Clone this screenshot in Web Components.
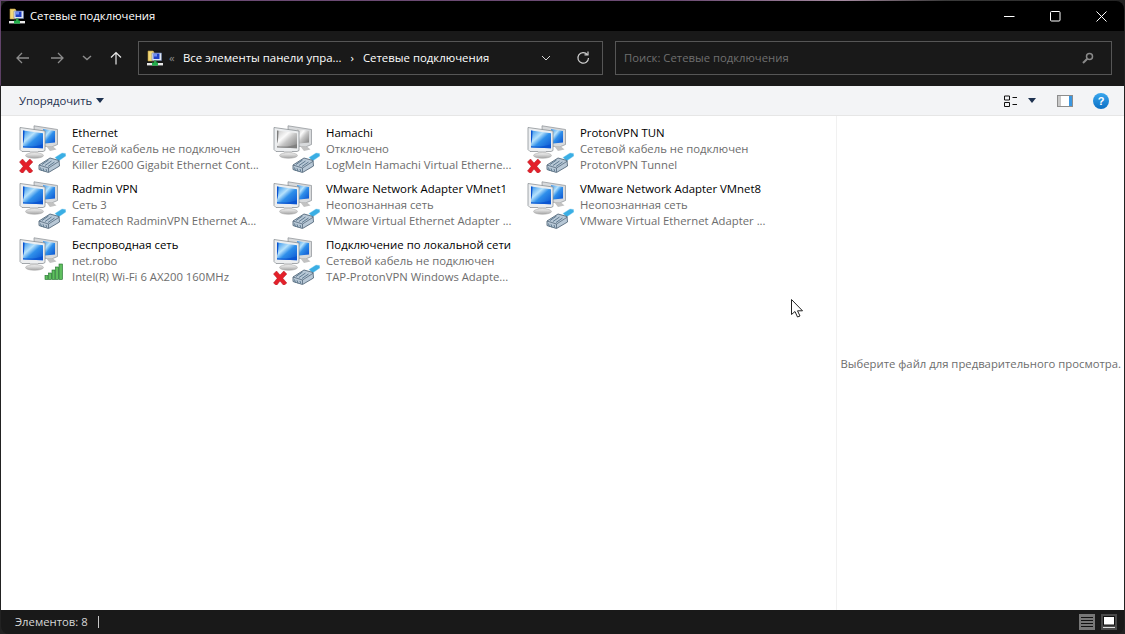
<!DOCTYPE html>
<html lang="ru"><head><meta charset="utf-8"><title>Сетевые подключения</title>
<style>
html,body{margin:0;height:100%;overflow:hidden;background:#1c1c1c}
body{font:11.3px "Open Sans","Noto Sans",sans-serif}
</style></head><body>
<explorer-window>
  <title-bar slot="title">Сетевые подключения</title-bar>
  <nav-bar slot="nav"></nav-bar>
  <tool-bar slot="tools"></tool-bar>
  <item-grid slot="items">
    <net-item name="Ethernet" status="Сетевой кабель не подключен" device="Killer E2600 Gigabit Ethernet Cont..." badge="x"></net-item>
    <net-item name="Hamachi" status="Отключено" device="LogMeIn Hamachi Virtual Etherne..." gray></net-item>
    <net-item name="ProtonVPN TUN" status="Сетевой кабель не подключен" device="ProtonVPN Tunnel" badge="x"></net-item>
    <net-item name="Radmin VPN" status="Сеть 3" device="Famatech RadminVPN Ethernet A..."></net-item>
    <net-item name="VMware Network Adapter VMnet1" status="Неопознанная сеть" device="VMware Virtual Ethernet Adapter ..."></net-item>
    <net-item name="VMware Network Adapter VMnet8" status="Неопознанная сеть" device="VMware Virtual Ethernet Adapter ..."></net-item>
    <net-item name="Беспроводная сеть" status="net.robo" device="Intel(R) Wi-Fi 6 AX200 160MHz" badge="wifi"></net-item>
    <net-item name="Подключение по локальной сети" status="Сетевой кабель не подключен" device="TAP-ProtonVPN Windows Adapte..." badge="x"></net-item>
  </item-grid>
  <preview-pane slot="preview">Выберите файл для предварительного просмотра.</preview-pane>
  <status-bar slot="status">Элементов: 8</status-bar>
  <mouse-cursor slot="cursor"></mouse-cursor>
</explorer-window>
<script>
const APPICON=`<svg width="16" height="16" viewBox="0 0 16 16" style="display:block;flex:none">
<path d="M1 1h5l1 1v9H1z" fill="#f2d878" stroke="#b9983a" stroke-width=".6"/>
<path d="M5 3h9.500v7.500H5z" fill="#dfe6f2" stroke="#6c7ea8" stroke-width=".6"/>
<rect x="6.500" y="3.500" width="6" height="5.500" fill="#1f3fc4"/><rect x="7" y="4" width="3" height="2.500" fill="#6f8df0"/>
<rect x="7" y="10.500" width="2.500" height="2.500" fill="#2fa24a"/><rect x="0" y="13" width="16" height="2.400" fill="#e8e8e8"/><rect x="5" y="12.600" width="6" height="3" fill="#22b14c"/></svg>`;
function define(tag,html){customElements.define(tag,class extends HTMLElement{
  constructor(){super();this.attachShadow({mode:'open'}).innerHTML=html;}
});}
function lateDefine(tag,fn){customElements.define(tag,class extends HTMLElement{
  connectedCallback(){if(!this.shadowRoot)this.attachShadow({mode:'open'}).innerHTML=fn(this);}
});}

define('explorer-window',`<style>
:host{position:relative;display:grid;grid-template-columns:1fr 287px;grid-template-rows:30px 55px 30px 1fr 24px;height:634px;box-sizing:border-box;padding:1px 1px 0 1px;
 background:
  linear-gradient(90deg,#6b4a74 0,#6a4a72 60%,#a58aa0 75%,#3a3a3a 84%,#222 100%) top/100% 1px no-repeat,
  linear-gradient(180deg,#6b4a74 0,#5a3e62 85px,#222 86px) left/1px 100% no-repeat,#222;}
::slotted([slot=title]),::slotted([slot=nav]),::slotted([slot=tools]),::slotted([slot=status]){grid-column:1/3}
</style><slot name="title"></slot><slot name="nav"></slot><slot name="tools"></slot><slot name="items"></slot><slot name="preview"></slot><slot name="status"></slot><slot name="cursor"></slot>`);

define('mouse-cursor',`<style>
:host{position:absolute;left:791px;top:299px;width:14px;height:20px;display:block}
svg{display:block}
</style><svg width="14" height="20" viewBox="0 0 14 20"><path d="M.5.500v15l3.500-3 2.500 5.500 2.500-1-2.500-5.200h5z" fill="#fff" stroke="#222" stroke-width="1" stroke-linejoin="round"/></svg>`);

define('title-bar',`<style>
:host{display:flex;align-items:center;background:#000;color:#fff;border-radius:8px 8px 0 0;padding-left:8px;font-size:11.3px;height:30px}
.txt{margin-left:5px;flex:1;padding-bottom:2px}
.b{width:46px;height:30px;display:flex;align-items:center;justify-content:center}
.ctl{display:flex}
svg{display:block}
</style>${APPICON}<span class="txt"><slot></slot></span>
<div class="ctl">
<div class="b"><svg width="11" height="11"><path d="M0 5.500h10.500" stroke="#fff"/></svg></div>
<div class="b"><svg width="11" height="11"><rect x=".5" y=".5" width="9.500" height="9.500" rx="1" fill="none" stroke="#fff"/></svg></div>
<div class="b"><svg width="11" height="11"><path d="M.5.500l10 10M10.500.500l-10 10" stroke="#fff" fill="none"/></svg></div>
</div>`);

define('nav-bar',`<style>
:host{display:flex;align-items:center;background:#191919;color:#fff;height:55px;box-sizing:border-box;padding:0 12px 1px 14px;font-size:11.3px}
svg{display:block;flex:none}
.arrows{display:flex;align-items:center;width:123px;flex:none}
.a{display:flex;justify-content:center;align-items:center;height:16px}
.box{height:34px;box-sizing:border-box;border:1px solid #565656;display:flex;align-items:center}
.box span{padding-bottom:2px}
.addr{width:465px;padding-left:8px;font-weight:500;flex:none;font-size:11.4px}
.addr .chev{color:#8a8a8a;margin:0 6px 0 6px;font-weight:400;width:8px}
.addr .sep{margin:0 9px 0 9px}
.addr .main{flex:1}
.search{flex:1;margin-left:12px;padding:0 17px 0 8px;color:#6f6f6f;justify-content:space-between}
.right{display:flex;align-items:center;gap:25px;margin-right:12px}
</style>
<div class="arrows">
<div class="a" style="width:16px"><svg width="14" height="12" viewBox="0 0 14 12"><path d="M13 6H1.500M6 1L1 6l5 5" fill="none" stroke="#8c8c8c" stroke-width="1.300"/></svg></div>
<div class="a" style="width:19px;margin-left:16px"><svg width="14" height="12" viewBox="0 0 14 12"><path d="M1 6h11.500M8 1l5 5-5 5" fill="none" stroke="#8c8c8c" stroke-width="1.300"/></svg></div>
<div class="a" style="width:12px;margin-left:15px"><svg width="10" height="6" viewBox="0 0 10 6"><path d="M1 1l4 3.500L9 1" fill="none" stroke="#8c8c8c" stroke-width="1.500"/></svg></div>
<div class="a" style="width:14px;margin-left:16px"><svg width="12" height="14" viewBox="0 0 12 14"><path d="M6 13.500V1.500M1 6.500l5-5 5 5" fill="none" stroke="#e8e8e8" stroke-width="1.200"/></svg></div>
</div>
<div class="box addr">${APPICON}
<span class="chev">«</span><span>Все элементы панели упра...</span><span class="sep">›</span><span class="main">Сетевые подключения</span>
<div class="right">
<svg width="10" height="6" viewBox="0 0 10 6"><path d="M1 1l4 4 4-4" fill="none" stroke="#d8d8d8"/></svg>
<svg width="14" height="14" viewBox="0 0 14 14"><path d="M11.300 3.500A5.300 5.300 0 1 0 12.500 7" fill="none" stroke="#d0d0d0" stroke-width="1.200"/><path d="M8.500 3.800h3.500V.4" fill="none" stroke="#d0d0d0" stroke-width="1.200"/></svg>
</div></div>
<div class="box search"><span>Поиск: Сетевые подключения</span>
<svg width="12" height="12" viewBox="0 0 12 12"><circle cx="7.500" cy="4.500" r="3" fill="none" stroke="#8a8a8a" stroke-width="1.500"/><path d="M5.300 6.700L1 11" stroke="#8a8a8a" stroke-width="2"/></svg></div>`);

define('tool-bar',`<style>
:host{display:flex;align-items:center;background:#f3f4f6;border-bottom:1px solid #e6e6e6;height:30px;box-sizing:border-box;padding:0 15px 0 18px;color:#1e3250;font-size:11.3px}
svg{display:block;flex:none}
.org{flex:1;display:flex;align-items:center;gap:4px}
.tri{width:0;height:0;border:4px solid transparent;border-top:5px solid #1e3250;border-bottom:0}
.views{display:flex;align-items:center}
</style>
<div class="org"><span>Упорядочить</span><span class="tri"></span></div>
<div class="views">
<svg width="14" height="14" viewBox="0 0 14 14"><path d="M.5 2h5v4h-5zM.5 8.500h5v4h-5z" fill="none" stroke="#111"/><path d="M8.500 3.500h4.500M8.500 10.500h4.500" stroke="#111"/></svg>
<span class="tri" style="margin-left:10px;margin-right:21px"></span>
<svg width="16" height="12" viewBox="0 0 16 12" style="margin-right:20px"><rect x=".5" y=".5" width="15" height="11" fill="#fff" stroke="#8d8d8d"/><rect x="1" y="1" width="3" height="10" fill="#c8c8c8"/><rect x="12" y="1" width="3" height="10" fill="#3b97e0"/></svg>
<svg width="16" height="16" viewBox="0 0 16 16"><defs><linearGradient id="h" x1="0" y1="0" x2="0" y2="1"><stop offset="0" stop-color="#3aa7ee"/><stop offset="1" stop-color="#0a6fc4"/></linearGradient></defs><circle cx="8" cy="8" r="8" fill="url(#h)"/><text x="8" y="12" text-anchor="middle" font-family="Liberation Sans" font-weight="700" font-size="11" fill="#fff">?</text></svg>
</div>`);

define('item-grid',`<style>
:host{display:grid;grid-template-columns:repeat(3,254px);grid-auto-rows:56px;align-content:start;background:#fff;padding:8px 0 0 17px;border-right:1px solid #f1f1f1;min-height:0}
</style><slot></slot>`);

lateDefine('net-item',el=>{
 const g=el.hasAttribute('gray');const b=el.getAttribute('badge');
 const s=g?['#fafafa','#7d7d7d','#c6c6c6','#a8a8a8']:['#b6e2fc','#0a52d0','#2f8fea','#5c86c8'];
 const wifi=b==='wifi';
 return `<style>
:host{display:flex;align-items:flex-start;gap:6px;font-size:11.3px;line-height:16px;color:#6d6d6d;white-space:nowrap}
svg{display:block;margin-top:1px;flex:none}
.t{padding-top:1px}
.n{color:#000;font-size:11.4px}
</style>
<svg width="48" height="48" viewBox="0 0 48 48">
<defs><linearGradient id="f" x1="0" y1="0" x2="1" y2="1"><stop offset="0" stop-color="${s[2]}"/><stop offset=".35" stop-color="${s[0]}"/><stop offset=".55" stop-color="${s[2]}"/><stop offset="1" stop-color="${s[1]}"/></linearGradient>
<linearGradient id="m" x1="0" y1="0" x2="0" y2="1"><stop offset="0" stop-color="#f6f6f6"/><stop offset="1" stop-color="#a4a4a4"/></linearGradient></defs>
<path d="M16 .8l23.500 3.700v15l-6 2.500-17-2z" fill="#d8dadc" stroke="#8b8f94" stroke-width=".7"/>
<path d="M25 4l12 2v11.500l-10 1z" fill="url(#f)"/>
<path d="M28 21l7 .5 3.500 3-6.500 1.500z" fill="#c2c2c2"/>
<path d="M2 2.500l25 3.500v19.500l-2 1H4l-2-2z" fill="#eceef0" stroke="#80858a" stroke-width=".7"/>
<path d="M5 5.500l20 2.700v15L5 22.500z" fill="url(#f)"/>
<path d="M5 5.500l1.500.2c-.2 6-.4 11-1.500 13z" fill="${s[1]}"/>
<path d="M5 22.500l20 .7v-4C18 22 10 22 5 21z" fill="${s[1]}" opacity=".8"/>
<path d="M12 26.500h8l.5 3h-9z" fill="url(#m)"/>
<ellipse cx="16.500" cy="30.500" rx="9" ry="2.800" fill="url(#m)" stroke="#a0a0a0" stroke-width=".5"/>
${wifi?`<g stroke="#1d6d2a" stroke-width=".6" fill="#5fbf5f"><rect x="27" y="38.500" width="3" height="4"/><rect x="30.500" y="36" width="3" height="6.500"/><rect x="34" y="33" width="3" height="9.500"/><rect x="37.500" y="30" width="3" height="12.500"/><rect x="41" y="27" width="3.500" height="15.500"/></g>`:`
<path d="M37 32.500l7-4.500 3.500 .5.300 2.500-7.300 5z" fill="#3aaee4" stroke="#7fcdf0" stroke-width=".4"/>
<path d="M21 40l11-7 9 2.500.5 5.500-11 6.500-9.500-3z" fill="#b8c8d6" stroke="#566a7c" stroke-width=".9"/>
<path d="M21 40l9.500 3 11-7M30.500 43v4" fill="none" stroke="#566a7c" stroke-width=".8"/>
<path d="M24 39.500l6.500-4.500M27 40.500l6.500-4.500M30 41.500l6.500-4.500M22.500 42.500l1 3.500M25 43.300l1 3.200M28 44l.7 2.500" stroke="#5f7a90" stroke-width="1" fill="none"/>`}
${b==='x'?`<path d="M1.500 37l3-3 3.500 4 3.800-4 3 3-4 4.300 4 4.700-3 2.500-3.800-4.500-3.500 4.500-3-2.500 3.700-4.700z" fill="#e4202a" stroke="#b01a22" stroke-width=".5"/>`:''}
</svg>
<div class="t"><div class="n">${el.getAttribute('name')}</div><div>${el.getAttribute('status')}</div><div>${el.getAttribute('device')}</div></div>`;
});

define('preview-pane',`<style>
:host{display:flex;align-items:center;justify-content:flex-end;background:#fff;color:#6d6d6d;font-size:11.3px;white-space:nowrap;padding:1px 3px 0 0}
</style><slot></slot>`);

define('status-bar',`<style>
:host{display:flex;align-items:center;background:#191919;color:#d6d6d6;height:24px;padding:0 7px 0 14px;font-size:11.3px;border-radius:0 0 8px 8px}
.l{padding-bottom:2px}
.bar{width:1px;height:12px;background:#c8c8c8;margin-left:10px;flex:none}
.sp{flex:1}
.v{width:16px;height:16px;display:block;margin-left:6px}
</style><span class="l"><slot></slot></span><span class="bar"></span><span class="sp"></span>
<svg class="v" viewBox="0 0 16 16"><rect width="16" height="16" fill="#777"/><path d="M2 3.500h12M2 6.500h12M2 9.500h12M2 12.500h12" stroke="#111"/></svg>
<svg class="v" viewBox="0 0 16 16"><rect width="16" height="16" fill="#4a4a4a"/><rect x="2.500" y="2.500" width="11" height="8.500" fill="#fff" stroke="#111"/><path d="M2 13.500h12" stroke="#ddd"/></svg>`);
</script>
</body></html>
